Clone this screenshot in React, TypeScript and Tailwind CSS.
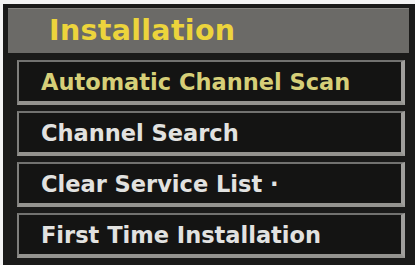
const items = [
  { label: "Automatic Channel Scan", active: true },
  { label: "Channel Search", active: false },
  { label: "Clear Service List ·", active: false },
  { label: "First Time Installation", active: false },
];

export default function App() {
  return (
    <div className="w-[415px] h-[265px] bg-[#f4f4f4] pt-[4px] pl-[3px] flex">
      <div
        className="flex-1 flex flex-col bg-[#1a1a19] pt-[4px] pl-[5px] pr-[6px]"
        style={{ fontFamily: '"DejaVu Sans", Verdana, sans-serif' }}
      >
        <div className="h-[45px] bg-[#6b6a67] border-t border-[#858480] flex items-center pl-[41px]">
          <span className="text-[28.5px] font-bold text-[#ecd43c] tracking-[0.3px]">
            Installation
          </span>
        </div>
        <div className="flex flex-col gap-[6px] mt-[7px] ml-[9px] mr-[4px]">
          {items.map((it) => (
            <div
              key={it.label}
              className="h-[45px] bg-[#141413] border-t-2 border-l-2 border-r-[4px] border-b-[4px] border-t-[#727270] border-l-[#7e7e7c] border-r-[#a09f9c] border-b-[#94938f] flex items-center pl-[22px] pt-[2px]"
            >
              <span
                className={
                  "text-[22.5px] font-bold whitespace-nowrap " +
                  (it.active ? "text-[#d6cf78]" : "text-[#e2e2e0]")
                }
              >
                {it.label}
              </span>
            </div>
          ))}
        </div>
      </div>
    </div>
  );
}
